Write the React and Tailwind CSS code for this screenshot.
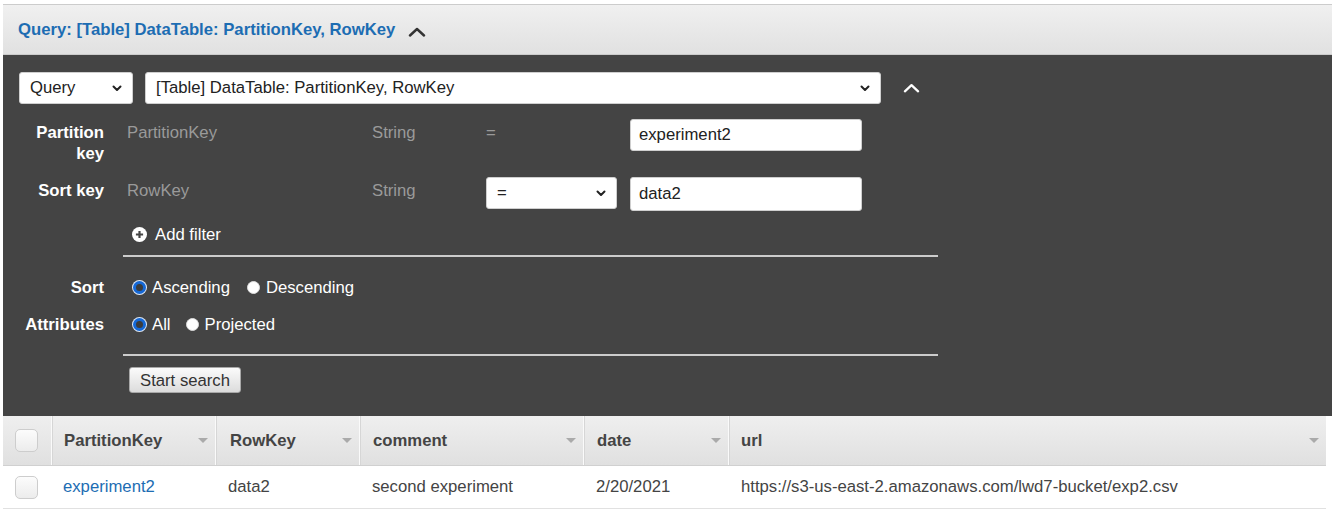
import { useState } from 'react'

const font = "font-['Liberation_Sans',Arial,sans-serif]"

function ChevronUp({ className }) {
  return (
    <svg className={className} viewBox="0 0 18 10" fill="none" stroke="currentColor" strokeWidth={2.4} strokeLinecap="round" strokeLinejoin="round">
      <path d="M2 8.5L9 2l7 6.5" />
    </svg>
  )
}

function Caret() {
  return (
    <svg className="w-[10px] h-[7px] text-[#222]" viewBox="0 0 10 7" fill="none" stroke="currentColor" strokeWidth={2} strokeLinecap="round" strokeLinejoin="round">
      <path d="M1.5 1.5L5 5l3.5-3.5" />
    </svg>
  )
}

function FakeSelect({ value, className }) {
  return (
    <div className={`h-[32px] bg-white border border-[#cfcfcf] rounded-[3px] flex items-center justify-between pl-[10px] pr-[10px] text-[16.7px] text-[#222] ${className}`}>
      <span>{value}</span>
      <Caret />
    </div>
  )
}

function Radio({ checked, label, onClick }) {
  return (
    <button type="button" onClick={onClick} className="flex items-center gap-[6px] text-white text-[16.7px]">
      {checked ? (
        <span className="w-[13px] h-[13px] rounded-full border-[3px] border-[#1568d6] bg-[#3c3c3c] ring-1 ring-[#dfe8f5]" />
      ) : (
        <span className="w-[13px] h-[13px] rounded-full bg-white border border-[#ddd]" />
      )}
      <span>{label}</span>
    </button>
  )
}

function SortCaret() {
  return <span className="w-0 h-0 border-l-[5px] border-r-[5px] border-t-[5px] border-l-transparent border-r-transparent border-t-[#aaa]" />
}

function Checkbox() {
  return <span className="block w-[23px] h-[23px] rounded-[5px] border border-[#cdcdcd] bg-gradient-to-b from-[#fcfcfc] to-[#ececec]" />
}

export default function App() {
  const [sort, setSort] = useState('asc')
  const [attrs, setAttrs] = useState('all')

  const columns = [
    { name: 'PartitionKey', pl: 'pl-[12px]' },
    { name: 'RowKey', pl: 'pl-[14px]' },
    { name: 'comment', pl: 'pl-[13px]' },
    { name: 'date', pl: 'pl-[13px]' },
    { name: 'url', pl: 'pl-[12px]' },
  ]

  return (
    <div className={`w-[1332px] h-[513px] bg-white pt-[4px] pl-[3px] overflow-hidden ${font}`}>
      {/* header */}
      <div className="h-[51px] border-t border-b border-[#cccccc] bg-gradient-to-b from-[#f0f0f0] to-[#e1e1e1] flex items-center pl-[15px]">
        <span className="text-[16.7px] font-bold text-[#1d6db3]">Query: [Table] DataTable: PartitionKey, RowKey</span>
        <ChevronUp className="w-[18px] h-[10px] ml-[13px] mt-[4px] text-[#333]" />
      </div>

      {/* query panel */}
      <div className="h-[361px] bg-[#444444] pt-[17px] pl-[16px] text-[16.7px]">
        <div className="flex items-center">
          <FakeSelect value="Query" className="w-[114px]" />
          <FakeSelect value="[Table] DataTable: PartitionKey, RowKey" className="w-[736px] ml-[12px]" />
          <ChevronUp className="w-[17px] h-[10px] ml-[22px] text-white" />
        </div>

        <div className="flex mt-[15px]">
          <div className="w-[85px] text-right text-white font-bold pt-[3px] leading-[21px]">Partition<br />key</div>
          <div className="ml-[23px] flex items-start">
            <span className="w-[245px] pt-[3px] leading-[21px] text-[#9a9a9a]">PartitionKey</span>
            <span className="w-[114px] pt-[3px] leading-[21px] text-[#9a9a9a]">String</span>
            <span className="w-[144px] pt-[3px] leading-[21px] text-[#9a9a9a]">=</span>
            <div className="w-[232px] h-[32px] bg-white border border-[#cfcfcf] rounded-[3px] flex items-center pl-[8px] text-[#222]">experiment2</div>
          </div>
        </div>

        <div className="flex mt-[13px]">
          <div className="w-[85px] text-right text-white font-bold pt-[3px] leading-[21px]">Sort key</div>
          <div className="ml-[23px] flex items-start">
            <span className="w-[245px] pt-[3px] leading-[21px] text-[#9a9a9a]">RowKey</span>
            <span className="w-[114px] pt-[3px] leading-[21px] text-[#9a9a9a]">String</span>
            <FakeSelect value="=" className="w-[131px]" />
            <div className="w-[232px] h-[34px] ml-[13px] bg-white border border-[#cfcfcf] rounded-[3px] flex items-center pl-[8px] text-[#222]">data2</div>
          </div>
        </div>

        <div className="ml-[104px] mt-[13px]">
          <div className="flex items-center h-[21px] pl-[9px] text-white">
            <span className="w-[15px] h-[15px] rounded-full bg-white flex items-center justify-center">
              <svg viewBox="0 0 10 10" className="w-[9px] h-[9px]" stroke="#444" strokeWidth={2.4}>
                <path d="M5 1v8M1 5h8" />
              </svg>
            </span>
            <span className="ml-[8px]">Add filter</span>
          </div>
          <div className="w-[815px] h-[2px] bg-[#cccccc] mt-[10px]" />
        </div>

        <div className="flex items-center mt-[20px] h-[21px]">
          <div className="w-[85px] text-right text-white font-bold">Sort</div>
          <div className="ml-[29px] flex items-center gap-[17px]">
            <Radio checked={sort === 'asc'} label="Ascending" onClick={() => setSort('asc')} />
            <Radio checked={sort === 'desc'} label="Descending" onClick={() => setSort('desc')} />
          </div>
        </div>

        <div className="flex items-center mt-[16px] h-[21px]">
          <div className="w-[85px] text-right text-white font-bold">Attributes</div>
          <div className="ml-[29px] flex items-center gap-[15px]">
            <Radio checked={attrs === 'all'} label="All" onClick={() => setAttrs('all')} />
            <Radio checked={attrs === 'proj'} label="Projected" onClick={() => setAttrs('proj')} />
          </div>
        </div>

        <div className="ml-[104px]">
          <div className="w-[815px] h-[2px] bg-[#cccccc] mt-[19px]" />
          <button type="button" className="mt-[11px] ml-[6px] h-[26px] px-[10px] rounded-[3px] border border-[#a8a8a8] bg-gradient-to-b from-[#fbfbfb] to-[#dcdcdc] text-[16.7px] text-[#333]">
            Start search
          </button>
        </div>
      </div>

      {/* results table */}
      <div className="w-[1323px]">
        <div className="grid grid-cols-[48px_164px_144px_224px_145px_1fr] h-[50px] border-b border-[#d0d0d0] bg-gradient-to-b from-[#efefef] to-[#e0e0e0]">
          <div className="flex items-center pl-[12px]">
            <Checkbox />
          </div>
          {columns.map((c) => (
            <div key={c.name} className={`flex items-center justify-between border-l border-[#fafafa] shadow-[inset_1px_0_0_#d6d6d6] ${c.pl} pr-[7px]`}>
              <span className="text-[16.7px] font-bold text-[#444]">{c.name}</span>
              <SortCaret />
            </div>
          ))}
        </div>
        <div className="grid grid-cols-[48px_164px_144px_224px_145px_1fr] h-[43px] border-b border-[#e1e1e1] text-[16.7px] text-[#444]">
          <div className="flex items-center pl-[12px]">
            <Checkbox />
          </div>
          <div className="flex items-center pl-[12px] text-[#1d6db3]">experiment2</div>
          <div className="flex items-center pl-[13px]">data2</div>
          <div className="flex items-center pl-[13px]">second experiment</div>
          <div className="flex items-center pl-[13px]">2/20/2021</div>
          <div className="flex items-center pl-[13px]">https://s3-us-east-2.amazonaws.com/lwd7-bucket/exp2.csv</div>
        </div>
      </div>
    </div>
  )
}
